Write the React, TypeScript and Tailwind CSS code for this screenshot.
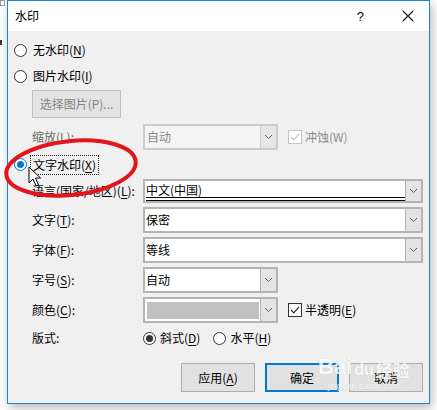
import type { ReactNode } from 'react';

function Chevron() {
  return (
    <svg width="9" height="6" viewBox="0 0 9 6" className="block">
      <path d="M1 1 L4.5 4.5 L8 1" fill="none" stroke="#5f5f5f" strokeWidth="1" />
    </svg>
  );
}

function Radio({ checked, focus }: { checked?: boolean; focus?: boolean }) {
  const ring = focus ? 'border-[#0078d7]' : 'border-[#333333]';
  const dot = focus ? 'bg-[#0078d7]' : 'bg-[#333333]';
  return (
    <span className={`flex items-center justify-center w-[13px] h-[13px] rounded-full border bg-white ${ring}`}>
      {checked && <span className={`block w-[7px] h-[7px] rounded-full ${dot}`} />}
    </span>
  );
}

function Check({ disabled }: { disabled?: boolean }) {
  const c = disabled ? '#c4c4c4' : '#333333';
  return (
    <span className={`flex items-center justify-center w-[14px] h-[14px] border bg-white ${disabled ? 'border-[#c4c4c4]' : 'border-[#333333]'}`}>
      <svg width="10" height="8" viewBox="0 0 10 8">
        <path d="M1 4 L3.8 6.8 L9 1" fill="none" stroke={c} strokeWidth="1.2" />
      </svg>
    </span>
  );
}

function Combo({ w, disabled, children }: { w: string; disabled?: boolean; children?: ReactNode }) {
  return (
    <div
      className={`flex h-full ${w} border-2 ${
        disabled ? 'border-[#cccccc] bg-[#f4f4f4] text-[#8a8a8a]' : 'border-[#b4b4b4] bg-white text-black'
      }`}
    >
      <div className="flex-1 flex items-center pl-[1px] min-w-0">{children}</div>
      <div
        className={`w-[16px] flex items-center justify-center border-l ${
          disabled ? 'border-[#cccccc] bg-[#e6e6e6]' : 'border-[#b4b4b4] bg-[#e3e3e3]'
        }`}
      >
        <Chevron />
      </div>
    </div>
  );
}

function U({ children }: { children: ReactNode }) {
  return <span className="underline underline-offset-[2px] decoration-1">{children}</span>;
}

function Label({ children, disabled }: { children: ReactNode; disabled?: boolean }) {
  return (
    <div className={`w-[135px] pl-[24px] shrink-0 flex items-center whitespace-nowrap ${disabled ? 'text-[#6d6d6d]' : ''}`}>
      {children}
    </div>
  );
}

export default function App() {
  return (
    <div className="relative w-[437px] h-[410px] bg-white overflow-hidden font-['Noto_Sans_CJK_SC','Microsoft_YaHei',sans-serif] text-[12px] leading-none text-black">
      {/* bits of the window behind */}
      <div className="absolute left-0 top-0 w-[5px] h-[6px] border border-[#9a9a9a]" />
      <div className="absolute left-0 top-[40px] w-[2px] h-[5px] bg-[#333]" />

      <div className="ml-[7px] w-[423px] h-[404px] border border-[#1a82d8] bg-[#f0f0f0] flex flex-col shadow-[2px_4px_10px_rgba(0,0,0,0.28)]">
        {/* title bar */}
        <div className="h-[30px] bg-white flex items-center pl-[7px] shrink-0">
          <span className="text-[12px]">水印</span>
          <span className="ml-auto mr-[38px] text-[13px] font-['Liberation_Sans',sans-serif]">?</span>
          <svg width="12" height="12" viewBox="0 0 12 12" className="mr-[15px]">
            <path d="M1 1 L11 11 M11 1 L1 11" stroke="#111" strokeWidth="1.1" />
          </svg>
        </div>

        {/* body */}
        <div className="flex-1 flex flex-col pt-[6px]">
          <div className="h-[26px] flex items-center pl-[6px] gap-[6px]">
            <Radio />
            <span>
              无水印(<U>N</U>)
            </span>
          </div>
          <div className="h-[26px] flex items-center pl-[6px] gap-[6px]">
            <Radio />
            <span>
              图片水印(<U>I</U>)
            </span>
          </div>
          <div className="mt-[1px] h-[28px] pl-[24px] flex">
            <div className="w-[89px] h-full border border-[#bfbfbf] bg-[#e3e3e3] text-[#848484] flex items-center justify-center">
              选择图片(P)...
            </div>
          </div>

          <div className="mt-[6px] h-[26px] flex">
            <Label disabled>缩放(L):</Label>
            <Combo w="w-[135px]" disabled>
              <span className="pl-[1px]">自动</span>
            </Combo>
            <div className="ml-[10px] flex items-center gap-[3px] text-[#8c8c8c]">
              <Check disabled />
              <span>冲蚀(W)</span>
            </div>
          </div>

          <div className="h-[29px] flex items-center pl-[6px]">
            <Radio checked focus />
            <span className="ml-[3px] h-[20px] px-[2px] flex items-center border border-dotted border-[#222]">
              文字水印(<U>X</U>)
            </span>
          </div>

          <div className="h-[24px] flex">
            <Label>
              语言(国家/地区)(<U>L</U>):
            </Label>
            <Combo w="w-[280px]">
              <div className="w-full h-full flex items-center border-b-[4px] border-double border-black pt-[2px]">
                中文(中国)
              </div>
            </Combo>
          </div>

          <div className="mt-[4px] h-[26px] flex">
            <Label>
              文字(<U>T</U>):
            </Label>
            <Combo w="w-[280px]">保密</Combo>
          </div>

          <div className="mt-[4px] h-[26px] flex">
            <Label>
              字体(<U>F</U>):
            </Label>
            <Combo w="w-[280px]">等线</Combo>
          </div>

          <div className="mt-[4px] h-[26px] flex">
            <Label>
              字号(<U>S</U>):
            </Label>
            <Combo w="w-[135px]">自动</Combo>
          </div>

          <div className="mt-[4px] h-[26px] flex">
            <Label>
              颜色(<U>C</U>):
            </Label>
            <Combo w="w-[135px]">
              <div className="ml-[1px] w-[112px] h-[17px] bg-[#c0c0c0]" />
            </Combo>
            <div className="ml-[10px] flex items-center gap-[3px]">
              <Check />
              <span>
                半透明(<U>E</U>)
              </span>
            </div>
          </div>

          <div className="mt-[3px] h-[24px] flex">
            <Label>版式:</Label>
            <div className="flex items-center gap-[4px]">
              <Radio checked />
              <span>
                斜式(<U>D</U>)
              </span>
            </div>
            <div className="ml-[13px] flex items-center gap-[4px]">
              <Radio />
              <span>
                水平(<U>H</U>)
              </span>
            </div>
          </div>

          <div className="mt-[13px] h-[29px] flex justify-end gap-[10px] pr-[6px]">
            <div className="w-[74px] h-full border border-[#adadad] bg-[#e1e1e1] flex items-center justify-center">
              应用(<U>A</U>)
            </div>
            <div className="w-[74px] h-full border-2 border-[#0078d7] bg-[#e1e1e1] flex items-center justify-center">
              确定
            </div>
            <div className="w-[74px] h-full border border-[#adadad] bg-[#e1e1e1] flex items-center justify-center">
              取消
            </div>
          </div>
        </div>
      </div>

      {/* red annotation ellipse */}
      <svg className="absolute left-0 top-[130px]" width="150" height="80" viewBox="0 0 150 80">
        <ellipse cx="71" cy="38" rx="65" ry="27" fill="none" stroke="#e3141c" strokeWidth="4" transform="rotate(-6 71 38)" />
      </svg>

      {/* mouse cursor */}
      <svg className="absolute left-[28px] top-[166px]" width="14" height="22" viewBox="0 0 14 22">
        <path d="M1 1 L1 17 L5 13 L8 20 L10.5 19 L7.5 12 L12.5 12 Z" fill="#fff" stroke="#000" strokeWidth="1" />
      </svg>

      {/* baidu watermark */}
      <div className="absolute left-[318px] top-[356px] flex flex-col items-center text-white opacity-80 pointer-events-none">
        <div className="flex items-end font-['Liberation_Sans',sans-serif] font-bold text-[22px] leading-none [text-shadow:0_0_1px_#bbb]">
          <span>Bai</span>
          <span className="text-[16px] ml-[2px]">du</span>
          <span className="text-[17px] ml-[2px] font-['Noto_Sans_CJK_SC',sans-serif]">经验</span>
        </div>
        <div className="mt-[4px] text-[9px] font-['Liberation_Sans',sans-serif] [text-shadow:0_0_1px_#bbb]">jingyan.baidu.com</div>
      </div>
    </div>
  );
}
